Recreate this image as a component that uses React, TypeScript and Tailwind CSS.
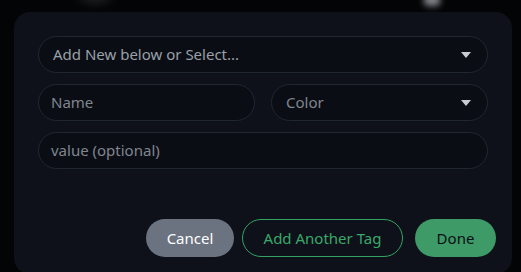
export default function App() {
  const font = { fontFamily: '"Noto Sans", "Open Sans", sans-serif' };
  const Caret = () => (
    <svg width="10" height="6" viewBox="0 0 10 6" className="shrink-0">
      <path d="M0 0 L10 0 L5 6 Z" fill="#c9cdd3" />
    </svg>
  );
  return (
    <div className="relative w-[521px] h-[272px] bg-[#030405] overflow-hidden" style={font}>
      <div className="absolute left-[80px] top-[-14px] w-[30px] h-[16px] rounded-full bg-[#3a3d42] blur-[6px] opacity-60" />
      <div className="absolute left-[424px] top-[-8px] w-[16px] h-[14px] rounded-[4px] bg-[#9ca0a6] blur-[3px] opacity-80" />
      <div className="absolute left-[14px] top-[12px] w-[498px] h-[262px] rounded-[16px] bg-[#0e1119] px-6 pt-6 pb-4 flex flex-col">
        <div className="h-[37px] rounded-full border border-[#1f2733] bg-[#0a0d14] flex items-center justify-between pl-[14px] pr-[16px]">
          <span className="text-[15px] text-[#9aa0a8]">Add New below or Select...</span>
          <Caret />
        </div>
        <div className="mt-[11px] grid grid-cols-[217px_217px] gap-4">
          <div className="h-[37px] rounded-full border border-[#1f2733] bg-[#0a0d14] flex items-center pl-[12px]">
            <span className="text-[15px] text-[#80868e]">Name</span>
          </div>
          <div className="h-[37px] rounded-full border border-[#1f2733] bg-[#0a0d14] flex items-center justify-between pl-[14px] pr-[16px]">
            <span className="text-[15px] text-[#80868e]">Color</span>
            <Caret />
          </div>
        </div>
        <div className="mt-[11px] h-[37px] rounded-full border border-[#1f2733] bg-[#0a0d14] flex items-center pl-[12px]">
          <span className="text-[15px] text-[#80868e]">value (optional)</span>
        </div>
        <div className="mt-auto flex justify-end items-center mr-[-8px] mb-[1px]">
          <button className="h-[38px] w-[88px] rounded-full bg-[#6b7280] text-[15px] text-white">Cancel</button>
          <button className="ml-2 h-[38px] w-[161px] rounded-full border border-[#34a262] text-[15px] text-[#3aa86a]">Add Another Tag</button>
          <button className="ml-3 h-[38px] w-[81px] rounded-full bg-[#3e9a66] text-[15px] text-[#0b0f14]">Done</button>
        </div>
      </div>
    </div>
  );
}
